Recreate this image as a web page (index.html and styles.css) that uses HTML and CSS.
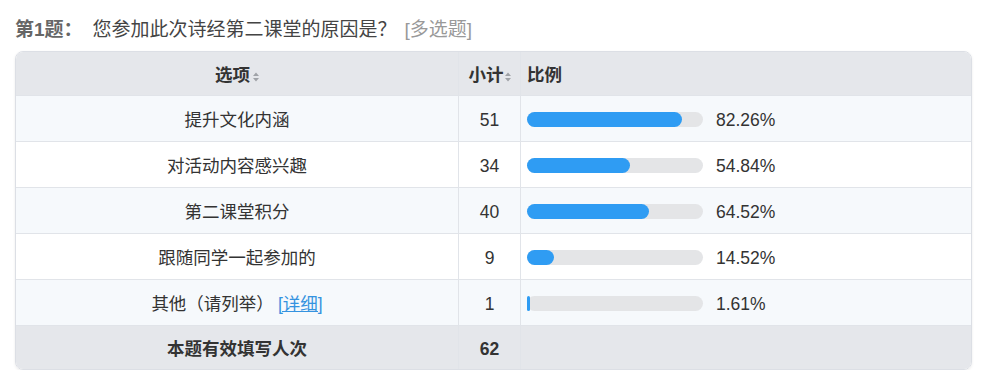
FILE: index.html
```html
<!DOCTYPE html>
<html lang="zh-CN">
<head>
<meta charset="utf-8">
<title>第1题</title>
<link rel="stylesheet" href="styles.css">
</head>
<body>
<div class="q-title">
  <span class="q-no">第1题：</span><span class="q-text">您参加此次诗经第二课堂的原因是？</span><span class="q-type">[多选题]</span>
</div>
<div class="tbl-wrap">
  <table class="tbl">
    <colgroup><col class="c1"><col class="c2"><col class="c3"></colgroup>
    <thead>
      <tr>
        <th class="center">选项<svg class="sort" viewBox="0 0 6 10" width="6" height="10"><path d="M0 4 L3 0.5 L6 4 Z M0 6 L3 9.5 L6 6 Z" fill="#a0a3a8"/></svg></th>
        <th class="center tight">小计<svg class="sort" viewBox="0 0 6 10" width="6" height="10"><path d="M0 4 L3 0.5 L6 4 Z M0 6 L3 9.5 L6 6 Z" fill="#a0a3a8"/></svg></th>
        <th class="left">比例</th>
      </tr>
    </thead>
    <tbody>
      <tr class="odd">
        <td class="center">提升文化内涵</td>
        <td class="center">51</td>
        <td class="left"><div class="ratio"><div class="track"><div class="fill" style="width:155px"></div></div><span class="pct">82.26%</span></div></td>
      </tr>
      <tr>
        <td class="center">对活动内容感兴趣</td>
        <td class="center">34</td>
        <td class="left"><div class="ratio"><div class="track"><div class="fill" style="width:103px"></div></div><span class="pct">54.84%</span></div></td>
      </tr>
      <tr class="odd">
        <td class="center">第二课堂积分</td>
        <td class="center">40</td>
        <td class="left"><div class="ratio"><div class="track"><div class="fill" style="width:122px"></div></div><span class="pct">64.52%</span></div></td>
      </tr>
      <tr>
        <td class="center">跟随同学一起参加的</td>
        <td class="center">9</td>
        <td class="left"><div class="ratio"><div class="track"><div class="fill" style="width:27px"></div></div><span class="pct">14.52%</span></div></td>
      </tr>
      <tr class="odd">
        <td class="center">其他（请列举）<a class="detail" href="#">[详细]</a></td>
        <td class="center">1</td>
        <td class="left"><div class="ratio"><div class="track"><div class="fill" style="width:3px"></div></div><span class="pct">1.61%</span></div></td>
      </tr>
    </tbody>
    <tfoot>
      <tr>
        <td class="center bold">本题有效填写人次</td>
        <td class="center bold">62</td>
        <td></td>
      </tr>
    </tfoot>
  </table>
</div>
</body>
</html>
```

FILE: styles.css
```css
* { box-sizing: border-box; }
html, body { margin: 0; padding: 0; background: #fff; }
body {
  padding: 18px 18px 0 15px;
  font-family: "Liberation Sans", "Noto Sans CJK SC", Arial, sans-serif;
  color: #333;
  width: 989px;
}
.q-title {
  font-size: 19px;
  line-height: 24px;
  height: 24px;
  white-space: nowrap;
}
.q-no { color: #666; font-weight: bold; margin-right: 10px; }
.q-text { color: #444; }
.q-type { color: #999; margin-left: 8px; }

.tbl-wrap {
  margin-top: 9px;
  width: 957px;
  border: 1px solid #dcdfe5;
  border-radius: 8px;
  overflow: hidden;
  box-shadow: 0 1px 3px rgba(0,0,0,0.08);
}
.tbl {
  width: 100%;
  border-collapse: separate;
  border-spacing: 0;
  table-layout: fixed;
  font-size: 17.5px;
}
.c1 { width: 443px; }
.c2 { width: 62px; }
.tbl th, .tbl td {
  padding: 2px 6px 0;
  border-bottom: 1px solid #e1e4e9;
  border-right: 1px solid #e1e4e9;
  height: 46px;
  white-space: nowrap;
  line-height: 22px;
}
.tbl th:last-child, .tbl td:last-child { border-right: none; }
.tbl tfoot td { border-bottom: none; height: 43px; }
.tbl thead th { height: 44px; background: #e5e7eb; font-weight: bold; color: #333; }
.tbl tbody tr { background: #fff; }
.tbl tbody tr.odd { background: #f6f9fc; }
.tbl tfoot tr { background: #e5e7eb; }
.center { text-align: center; }
.left { text-align: left; }
.bold { font-weight: bold; }
.tbl .tight { padding: 2px 2px 0; }
.sort { display: inline-block; vertical-align: -1px; margin-left: 3px; }
.tight .sort { margin-left: 1px; }

.ratio { display: flex; align-items: center; }
.track {
  width: 176px;
  height: 15px;
  border-radius: 8px;
  background: #e4e5e7;
  flex: none;
}
.fill {
  height: 100%;
  background: #2f9cf3;
  border-radius: 8px;
}
.pct { margin-left: 13px; color: #333; }
.detail { color: #3593e0; text-decoration: underline; margin-left: 4px; }
```
